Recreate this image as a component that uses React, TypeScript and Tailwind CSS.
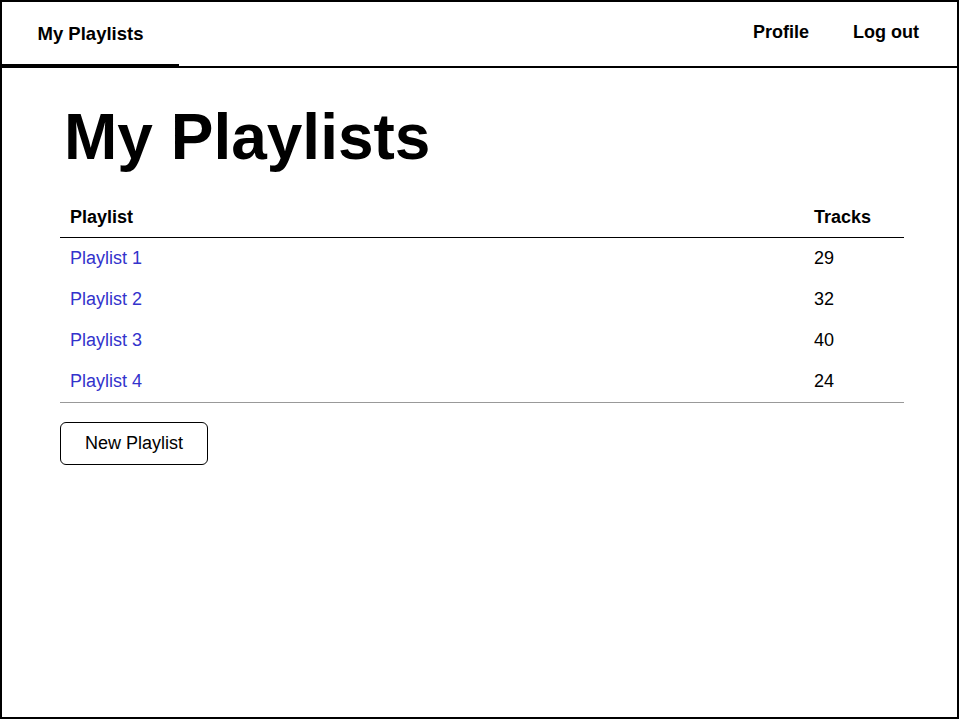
const playlists = [
  { name: "Playlist 1", tracks: 29 },
  { name: "Playlist 2", tracks: 32 },
  { name: "Playlist 3", tracks: 40 },
  { name: "Playlist 4", tracks: 24 },
];

export default function App() {
  return (
    <div
      className="w-[959px] h-[719px] border-2 border-black bg-white text-black flex flex-col"
      style={{ fontFamily: '"Liberation Sans", Arial, sans-serif' }}
    >
      <header className="h-[66px] border-b-2 border-black flex items-stretch justify-between">
        <a className="w-[177px] flex items-center justify-center border-b-4 border-black text-[18.5px] font-bold pt-[2px] -mb-[2px]">
          My Playlists
        </a>
        <nav className="flex items-center gap-[44px] pr-[38px] text-[18px] font-bold pb-[4px]">
          <a>Profile</a>
          <a>Log out</a>
        </nav>
      </header>

      <main className="pl-[58px] w-[902px]">
        <h1 className="mt-[33px] pl-[4px] text-[64px] font-bold leading-[1.15]">My Playlists</h1>

        <table className="mt-[21px] w-full text-[18px] border-separate border-spacing-0">
          <thead>
            <tr>
              <th className="h-[42px] border-b border-black text-left font-bold pl-[10px] pt-[2px]">Playlist</th>
              <th className="h-[42px] border-b border-black text-left font-bold w-[90px] pt-[2px]">Tracks</th>
            </tr>
          </thead>
          <tbody>
            {playlists.map((p, i) => {
              const last = i === playlists.length - 1;
              return (
                <tr key={p.name}>
                  <td className={last ? "h-[42px] pl-[10px] pt-[1px] border-b border-[#999999]" : "h-[41px] pl-[10px]"}>
                    <a className="text-[#3333cc]">{p.name}</a>
                  </td>
                  <td className={last ? "h-[42px] pt-[1px] border-b border-[#999999]" : "h-[41px]"}>{p.tracks}</td>
                </tr>
              );
            })}
          </tbody>
        </table>

        <button className="mt-[19px] w-[148px] h-[43px] border border-black rounded-[6px] text-[18px] bg-white">
          New Playlist
        </button>
      </main>
    </div>
  );
}
